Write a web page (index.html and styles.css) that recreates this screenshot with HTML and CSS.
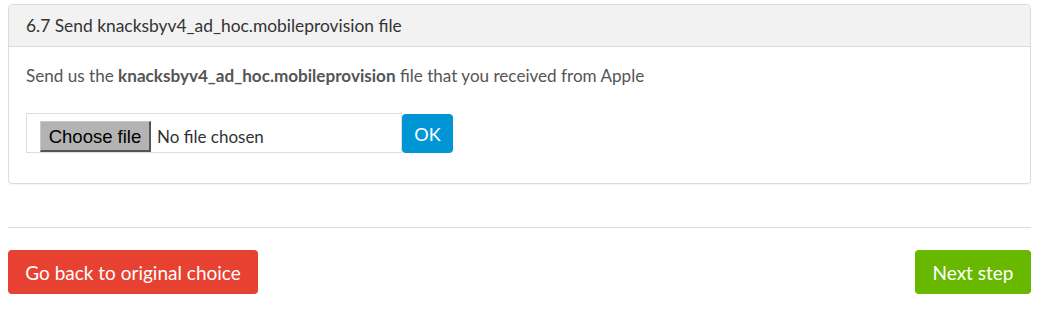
FILE: index.html
```html
<!DOCTYPE html>
<html>
<head>
<meta charset="utf-8">
<link rel="stylesheet" href="styles.css">
</head>
<body>
<div class="page">
  <div class="panel">
    <div class="panel-heading">6.7 Send knacksbyv4_ad_hoc.mobileprovision file</div>
    <div class="panel-body">
      <p class="intro">Send us the <strong>knacksbyv4_ad_hoc.mobileprovision</strong> file that you received from Apple</p>
      <div class="upload-row">
        <div class="file-box">
          <span class="file-btn">Choose file</span>
          <span class="file-name">No file chosen</span>
        </div>
        <button class="btn btn-ok">OK</button>
      </div>
    </div>
  </div>
  <hr class="divider">
  <div class="actions">
    <button class="btn btn-back">Go back to original choice</button>
    <button class="btn btn-next">Next step</button>
  </div>
</div>
</body>
</html>
```

FILE: styles.css
```css
* { box-sizing: border-box; }
html, body { margin: 0; padding: 0; background: #fff; }
body { font-family: Lato, "Open Sans", sans-serif; color: #555; }
.page { padding: 4px 10px 0 8px; }
.panel {
  border: 1px solid #dcdcdc;
  border-radius: 4px;
  height: 180px;
  box-shadow: 0 1px 1px rgba(0,0,0,0.04);
}
.panel-heading {
  height: 42px;
  background: #f2f2f2;
  border-bottom: 1px solid #dcdcdc;
  border-radius: 3px 3px 0 0;
  padding: 0 17px 1px;
  display: flex;
  align-items: center;
  font-size: 17.4px;
  color: #333;
}
.panel-body { padding: 0 17px; }
.intro {
  margin: 0;
  padding-top: 19px;
  font-size: 17.1px;
  line-height: 20px;
  color: #555;
}
.intro strong { font-weight: 700; color: #555; }
.upload-row {
  display: flex;
  align-items: flex-start;
  margin-top: 27px;
}
.file-box {
  width: 376px;
  height: 40px;
  border: 1px solid #ddd;
  display: flex;
  align-items: flex-end;
  padding-left: 13px;
}
.file-btn {
  font-family: "Liberation Sans", Arial, sans-serif;
  font-size: 18.5px;
  color: #000;
  background: #b3b3b3;
  height: 31px;
  width: 111px;
  display: flex;
  align-items: center;
  justify-content: center;
  border-top: 1px solid #c8c8c8;
  border-left: 1px solid #c8c8c8;
  border-right: 2px solid #555;
  border-bottom: 2px solid #555;
  padding-top: 1px;
  white-space: nowrap;
}
.file-name {
  font-size: 17px;
  color: #333;
  height: 31px;
  display: flex;
  align-items: center;
  padding-left: 6px;
  white-space: nowrap;
}
.btn {
  border: none;
  border-radius: 4px;
  color: #fff;
  font-family: Lato, "Open Sans", sans-serif;
  font-size: 19px;
  cursor: pointer;
  padding: 0;
  white-space: nowrap;
}
.btn-ok {
  background: #0096d6;
  height: 39px;
  width: 51px;
  margin-top: 1px;
  font-size: 18px;
}
.divider {
  border: none;
  border-top: 1px solid #dcdcdc;
  margin: 43px 0 0 0;
  height: 0;
}
.actions {
  display: flex;
  justify-content: space-between;
  margin-top: 22px;
}
.btn-back { background: #e74132; height: 44px; width: 250px; }
.btn-next { background: #68b800; height: 44px; width: 116px; }
```
